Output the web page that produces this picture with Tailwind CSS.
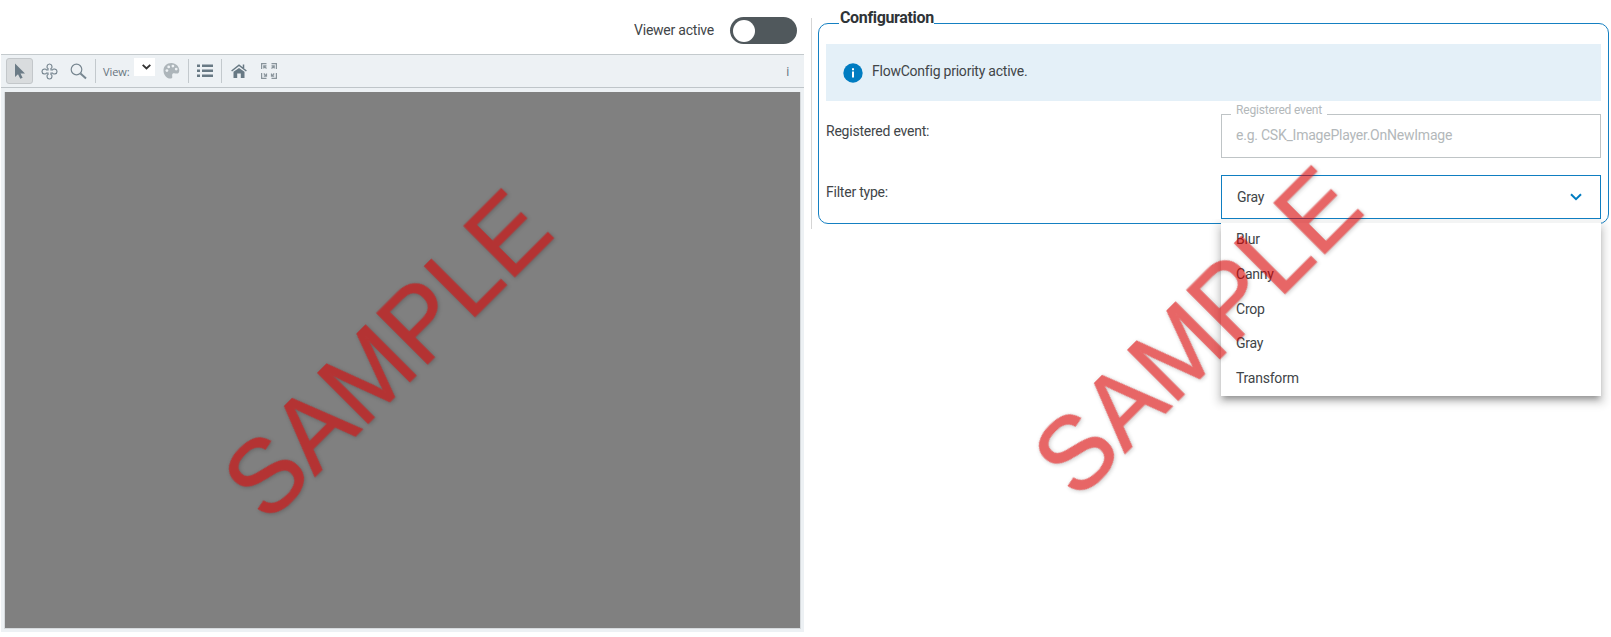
<!DOCTYPE html>
<html lang="en">
<head>
<meta charset="utf-8">
<title>Viewer</title>
<script src="https://cdn.jsdelivr.net/npm/@tailwindcss/browser@4"></script>
</head>
<body class="bg-white overflow-hidden font-['Roboto',sans-serif] text-sm tracking-[-0.23px] text-[#414548]">
<div class="relative flex w-[1611px] h-[637px]">
  <section class="w-[804px] pl-px flex flex-col">
    <div class="h-[54px] pt-[17px] pr-[7px] flex justify-end gap-4">
      <span class="leading-[27px]">Viewer active</span>
      <span class="w-[67px] h-[27px] rounded-full bg-[#50585c] flex items-center pl-[3px]"><span class="size-[22px] rounded-full bg-white"></span></span>
    </div>
    <div class="h-[578px] bg-[#edf1f4] flex flex-col border-t border-[#c4cacd]">
      <div class="h-[33px] flex items-center border-b border-[#bfc5c9] pl-[5px]">
        <span class="w-[27px] h-[26px] rounded-[3px] border border-[#c3c7ca] bg-[#d9dcde] flex items-center justify-center">
          <svg width="12" height="17" viewBox="0 0 12 17"><path d="M1 0.500V14L4 11.300L6.300 15.800L8.600 14.800L6.500 10.600H11Z" fill="#6b7b86"/></svg>
        </span>
        <svg class="ml-[8px]" width="17" height="17" viewBox="0 0 17 17" fill="none" stroke="#788791" stroke-width="1.2"><path d="M7 7V5.5C5.5 5 5.5 1 8.5 1S11.500 5 10 5.500V7H11.500C12 5.500 16 5.500 16 8.500S12 11.500 11.500 10H10V11.500C11.500 12 11.500 16 8.500 16S5.500 12 7 11.500V10H5.500C5 11.500 1 11.500 1 8.500S5 5.500 5.500 7Z"/></svg>
        <svg class="ml-[12px]" width="17" height="17" viewBox="0 0 17 17" fill="none" stroke="#788791"><circle cx="6.500" cy="6.500" r="5.300" stroke-width="1.200"/><path d="M10.500 10.500L16 15.500" stroke-width="2"/></svg>
        <span class="ml-2 w-px h-6 bg-[#c3c9cd]"></span>
        <span class="ml-[7px] w-[28px] font-['Open_Sans',sans-serif] text-[11px] tracking-[-0.1px] text-[#66747e] pt-px">View:</span>
        <span class="ml-[3px] w-[21px] h-[18px] mb-2 bg-white flex items-center justify-center pl-[3px]"><svg width="9" height="6" viewBox="0 0 9 6" fill="none" stroke="#333" stroke-width="1.900"><path d="M0.700 0.900L4.500 4.500L8.300 0.900"/></svg></span>
        <svg class="ml-[8px]" width="17" height="16" viewBox="0 0 17 16"><path d="M8.500 0C3.700 0 0.500 3.200 0.500 7.500C0.500 12.500 4.200 16 8 15.500C10.600 15.100 8.200 12.200 9.600 10.800C11.200 9.200 13.600 11.600 15.500 10C18 6.300 14.300 0 8.500 0Z" fill="#adb5ba"/><g fill="#edf1f4"><circle cx="3.900" cy="7.600" r="1.400"/><circle cx="5.700" cy="3.900" r="1.400"/><circle cx="9.900" cy="3.100" r="1.400"/><circle cx="13.200" cy="6.100" r="1.400"/></g></svg>
        <span class="ml-[8px] w-px h-6 bg-[#c3c9cd]"></span>
        <svg class="ml-[8px]" width="16" height="14" viewBox="0 0 16 14" fill="#687984"><path d="M0 .5H3V3H0ZM5 .5H16V3H5ZM0 5.500H3V8H0ZM5 5.500H16V8H5ZM0 10.500H3V13H0ZM5 10.500H16V13H5Z"/></svg>
        <span class="ml-[8px] w-px h-6 bg-[#c3c9cd]"></span>
        <svg class="ml-[9px]" width="16" height="14" viewBox="0 0 16 14"><path d="M0.600 7L8 1.200L15.400 7M12.500 .5V4" fill="none" stroke="#687984" stroke-width="1.500"/><path d="M2.500 7.800L8 4L13.500 7.800V14H9.800V9.500H6.200V14H2.500Z" fill="#687984"/></svg>
        <svg class="ml-[14px]" width="16" height="16" viewBox="0 0 16 16" fill="none" stroke="#89949b" stroke-width="1.200"><path d="M.6 6V.6H5.500M10.500 .6H15.400V6M15.400 10V15.400H10.500M5.500 15.400H.6V10"/><path d="M2.800 5.500V2.800H5.500M3 3L5.500 5.500M13.200 5.500V2.800H10.500M13 3L10.500 5.500M2.800 13.200H5.500V10.500M5 12.800L2.800 10.500M13.200 13.200H10.500V10.500M11 12.800L13.200 10.500"/></svg>
        <span class="ml-auto mr-[15px] pt-[2px] font-['Open_Sans',sans-serif] text-[12px] text-[#586b78]">i</span>
      </div>
      <div class="mt-[4px] ml-[3px] mr-[3px] h-[537px] border-l border-r border-b border-[#d6dadd] bg-[#808080]"></div>
    </div>
  </section>

  <div class="ml-[7px] mt-[18px] w-px h-[211px] bg-[#d5d5d5]"></div>

  <section class="relative ml-[6px] mt-[23px] w-[791px] h-[201px] rounded-[10px] border border-[#1580c2] px-[7px]">
    <h1 class="absolute left-[20px] top-[-16px] w-[95px] h-[22px] bg-white text-base font-bold leading-[20px] text-[#2f3437] pl-px tracking-[-0.35px]">Configuration</h1>
    <div class="mt-[20px] h-[57px] bg-[#e4f0f8] flex items-center pl-[17px] gap-[9px]">
      <svg width="20" height="20" viewBox="0 0 20 20"><circle cx="10" cy="10" r="9.700" fill="#007cc1"/><path d="M9 8.500H11V14.500H9ZM9 5.300H11V7.300H9Z" fill="white"/></svg>
      <span class="-mt-[3px]">FlowConfig priority active.</span>
    </div>
    <div class="h-[57px] flex justify-between mt-[13px]">
      <span class="mt-[7px]">Registered event:</span>
      <div class="relative w-[380px] h-[44px] border border-[#bfc4c6] pl-[14px] leading-[41px] text-[#b3b8ba]">
        <span class="absolute left-[9px] top-[-13px] px-[5px] bg-white text-[12px] leading-[16px] tracking-[-0.18px] text-[#b3b8ba]">Registered event</span>e.g. CSK_ImagePlayer.OnNewImage
      </div>
    </div>
    <div class="flex justify-between mt-[4px]">
      <span class="mt-[7px]">Filter type:</span>
      <div class="relative w-[380px] h-[44px] border border-[#0f7ec1] bg-white pl-[15px] pr-[18px] flex items-center justify-between">
        <span>Gray</span>
        <svg width="12" height="8" viewBox="0 0 12 8" fill="none" stroke="#007cc1" stroke-width="2"><path d="M1 1.200L6 6.200L11 1.200"/></svg>
        <ul class="absolute left-[-1px] top-[47px] w-[380px] h-[173px] pt-[4px] bg-white shadow-[0_-4px_0_0_#f3f4f4,0_5px_6px_-2px_rgba(0,0,0,0.35),0_4px_8px_4px_rgba(0,0,0,0.13)] [clip-path:inset(-4px_-12px_-18px_-12px)]">
          <li class="h-[35px] leading-[24px] pl-[15px]">Blur</li>
          <li class="h-[35px] leading-[24px] pl-[15px]">Canny</li>
          <li class="h-[34px] leading-[24px] pl-[15px]">Crop</li>
          <li class="h-[35px] leading-[24px] pl-[15px]">Gray</li>
          <li class="h-[34px] leading-[24px] pl-[15px]">Transform</li>
        </ul>
      </div>
    </div>
  </section>

  <svg class="absolute inset-0 pointer-events-none tracking-normal" width="1611" height="637" viewBox="0 0 1611 637">
    <g font-family="Liberation Sans, sans-serif" font-size="101" fill="#d80000" stroke="#d80000" stroke-width="1.2" opacity="0.6" class="drop-shadow-[1px_1px_2px_rgba(0,0,0,0.35)]">
      <text transform="translate(267.600 524.500) rotate(-45) scale(0.998 1.025)">SAMPLE</text>
      <text transform="translate(1077.600 501.500) rotate(-45) scale(0.998 1.025)">SAMPLE</text>
    </g>
  </svg>
</div>
</body>
</html>
